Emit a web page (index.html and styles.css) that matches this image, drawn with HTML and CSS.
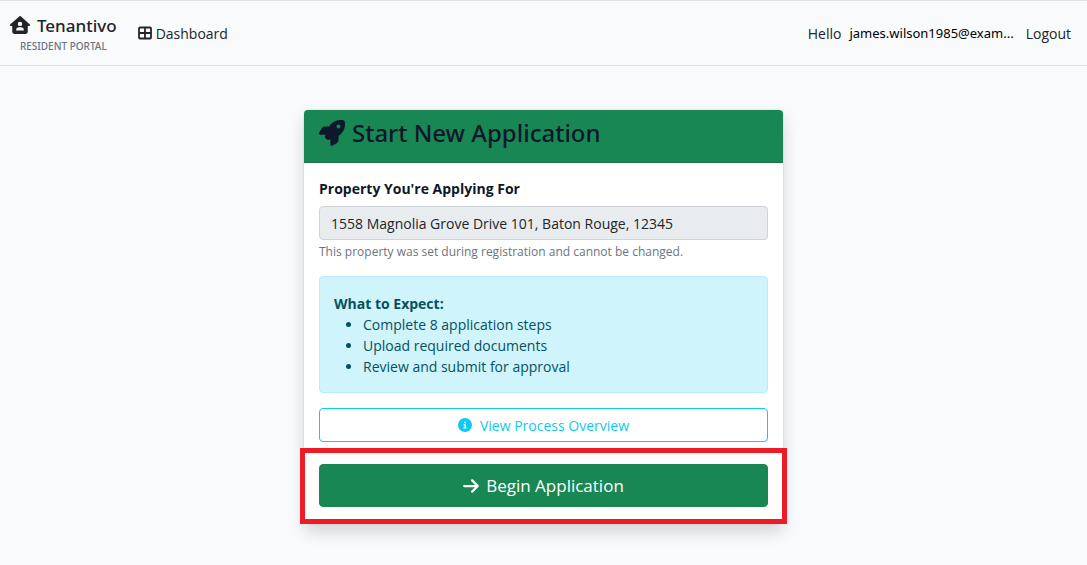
FILE: index.html
```html
<!DOCTYPE html>
<html lang="en">
<head>
	<meta charset="utf-8">
	<title>Start New Application - Tenantivo</title>
	<meta name="viewport" content="width=device-width, initial-scale=1">
	<link rel="stylesheet" href="styles.css">
</head>
<body>
	<header class="navbar">
		<a class="brand" href="#">
			<span class="brand-name">
				<svg class="brand-icon" viewBox="0 0 576 512" aria-hidden="true"><path fill="currentColor" d="M575.8 255.5c0 18-15 32.1-32 32.1h-32l.7 160.2c.2 35.5-28.5 64.3-64 64.3H128.1c-35.3 0-64-28.7-64-64V287.6H32c-18 0-32-14-32-32.1c0-9 3-17 10-24L266.4 8c7-7 15-8 22-8s15 2 21 7L564.8 231.5c8 7 12 15 11 24zM352 224a64 64 0 1 0 -128 0 64 64 0 1 0 128 0zm-96 96c-44.2 0-80 35.8-80 80c0 8.8 7.2 16 16 16H384c8.8 0 16-7.2 16-16c0-44.2-35.8-80-80-80H256z"/></svg>
				Tenantivo
			</span>
			<span class="brand-sub">RESIDENT PORTAL</span>
		</a>
		<nav class="nav-main">
			<a class="nav-link" href="#">
				<svg class="nav-icon" viewBox="0 0 14 14" aria-hidden="true"><path fill="none" stroke="currentColor" stroke-width="1.8" d="M2 1.5h10a1 1 0 0 1 1 1v9a1 1 0 0 1-1 1H2a1 1 0 0 1-1-1v-9a1 1 0 0 1 1-1zM7 2v10M1 7h12"/></svg>
				Dashboard
			</a>
		</nav>
		<div class="nav-user">
			<span>Hello</span>
			<a class="user-email" href="#">james.wilson1985@exam...</a>
			<a class="nav-link" href="#">Logout</a>
		</div>
	</header>

	<main class="container">
		<form class="card">
			<div class="card-header">
				<h1>
					<svg class="title-icon" viewBox="0 0 512 512" aria-hidden="true"><path fill="currentColor" d="M156.6 384.9L125.7 354c-8.5-8.5-11.5-20.8-7.7-32.2c3-8.9 7-20.5 11.8-33.8L24 288c-8.6 0-16.6-4.6-20.9-12.1s-4.2-16.7 .2-24.1l52.5-88.5c13-21.9 36.5-35.3 61.9-35.3l82.3 0c2.4-4 4.8-7.7 7.2-11.3C289.1-4.1 411.1-8.1 483.9 5.3c11.6 2.1 20.6 11.2 22.8 22.8c13.4 72.9 9.3 194.8-111.4 276.7c-3.5 2.4-7.3 4.8-11.3 7.2v82.3c0 25.4-13.4 49-35.3 61.9l-88.5 52.5c-7.4 4.4-16.6 4.5-24.1 .2s-12.1-12.2-12.1-20.9V380.8c-14.1 4.9-26.4 8.9-35.7 11.9c-11.2 3.6-23.4 .5-31.8-7.8zM384 168a40 40 0 1 0 0-80 40 40 0 1 0 0 80z"/></svg>
					Start New Application
				</h1>
			</div>
			<div class="card-body">
				<label class="form-label" for="property">Property You're Applying For</label>
				<input class="form-control" type="text" id="property" name="property" value="1558 Magnolia Grove Drive 101, Baton Rouge, 12345" readonly>
				<small class="form-text">This property was set during registration and cannot be changed.</small>

				<div class="alert">
					<strong>What to Expect:</strong>
					<ul>
						<li>Complete 8 application steps</li>
						<li>Upload required documents</li>
						<li>Review and submit for approval</li>
					</ul>
				</div>

				<button type="button" class="btn btn-outline">
					<svg class="info-icon" viewBox="0 0 512 512" aria-hidden="true"><path fill="currentColor" d="M256 512A256 256 0 1 0 256 0a256 256 0 1 0 0 512zM216 336h24V272H216c-13.3 0-24-10.7-24-24s10.7-24 24-24h48c13.3 0 24 10.7 24 24v88h8c13.3 0 24 10.7 24 24s-10.7 24-24 24H216c-13.3 0-24-10.7-24-24s10.7-24 24-24zm40-208a32 32 0 1 1 0 64 32 32 0 1 1 0-64z"/></svg>
					View Process Overview
				</button>
			</div>
			<div class="highlight">
				<button type="submit" class="btn btn-begin">
					<svg class="arrow-icon" viewBox="0 0 448 512" aria-hidden="true"><path fill="currentColor" d="M438.6 278.6c12.5-12.5 12.5-32.8 0-45.3l-160-160c-12.5-12.5-32.8-12.5-45.3 0s-12.5 32.8 0 45.3L338.8 224 32 224c-17.7 0-32 14.3-32 32s14.3 32 32 32l306.7 0L233.4 393.4c-12.5 12.5-12.5 32.8 0 45.3s32.8 12.5 45.3 0l160-160z"/></svg>
					Begin Application
				</button>
			</div>
		</form>
	</main>
</body>
</html>
```
FILE: styles.css
```css
* {
	box-sizing: border-box;
}
body {
	margin: 0;
	background: #f8fafc;
	color: #0f172a;
	font-family: "Segoe UI", "Open Sans", "Noto Sans", sans-serif;
	font-size: 14px;
	line-height: 21px;
}
a {
	color: inherit;
	text-decoration: none;
}

/* top bar */
.navbar {
	display: flex;
	align-items: center;
	height: 66px;
	padding: 0 16px 0 10px;
	border-top: 1px solid #dee2e0;
	border-bottom: 1px solid #dee2e6;
	color: #212529;
}
.brand {
	display: flex;
	flex-direction: column;
	align-items: center;
	font-family: "Segoe UI", "Noto Sans", sans-serif;
	font-weight: 500;
}
.brand-name {
	display: flex;
	align-items: center;
	gap: 7px;
	font-size: 17px;
	line-height: 25px;
}
.brand-icon {
	width: 20px;
	height: 18px;
}
.brand-sub {
	color: #6c757d;
	font-size: 10px;
	line-height: 16px;
}
.nav-main {
	margin-left: 21px;
}
.nav-link {
	display: flex;
	align-items: center;
	gap: 4px;
}
.nav-icon {
	width: 14px;
	height: 14px;
}
.nav-user {
	display: flex;
	gap: 8px;
	margin-left: auto;
}
.user-email {
	margin-right: 4px;
	color: #000;
	font-family: "Segoe UI", "Noto Sans", sans-serif;
	font-size: 13px;
}

/* application card */
.container {
	max-width: 479px;
	margin: 44px auto;
}
.card {
	border-radius: 4px;
	background: #fff;
	box-shadow: 0 8px 16px rgba(0, 0, 0, 0.15), 0 0 0 1px rgba(0, 0, 0, 0.04);
}
.card-header {
	padding: 7px 15px 14px;
	border-bottom: 1px solid #167448;
	border-radius: 4px 4px 0 0;
	background: #198754;
}
.card-header h1 {
	display: flex;
	align-items: center;
	gap: 7px;
	margin: 0;
	font-family: "Segoe UI", "Noto Sans", sans-serif;
	font-size: 24px;
	font-weight: 500;
	line-height: 31px;
}
.title-icon {
	width: 26px;
	height: 26px;
}
.card-body {
	padding: 15px 15px 6px;
}
.form-label {
	display: block;
	margin-bottom: 7px;
	font-weight: 700;
}
.form-control {
	display: block;
	width: 100%;
	height: 34px;
	padding: 0 11px;
	border: 1px solid #ced4da;
	border-radius: 4px;
	background: #e9ecef;
	color: #212529;
	font: inherit;
}
.form-text {
	display: block;
	margin: 1px 0 14px;
	color: #6c757d;
	font-size: 12px;
}
.alert {
	margin-bottom: 15px;
	padding: 16px 14px 15px;
	border: 1px solid #b6effb;
	border-radius: 4px;
	background: #cff4fc;
	color: #055160;
}
.alert ul {
	margin: 0;
	padding-left: 29px;
}
.btn {
	display: flex;
	align-items: center;
	justify-content: center;
	width: 100%;
	border: 1px solid;
	border-radius: 4px;
	font: inherit;
	cursor: pointer;
}
.btn-outline {
	gap: 8px;
	height: 34px;
	border-color: #0dcaf0;
	background: #fff;
	color: #0dcaf0;
}
.info-icon {
	width: 14px;
	height: 14px;
}
.highlight {
	margin: 0 -4px;
	padding: 11px 14px 12px;
	border: 5px solid #ed1c24;
}
.btn-begin {
	gap: 7px;
	height: 43px;
	border-color: #198754;
	background: #198754;
	color: #fff;
	font-size: 17px;
}
.arrow-icon {
	width: 16px;
	height: 18px;
}
```
